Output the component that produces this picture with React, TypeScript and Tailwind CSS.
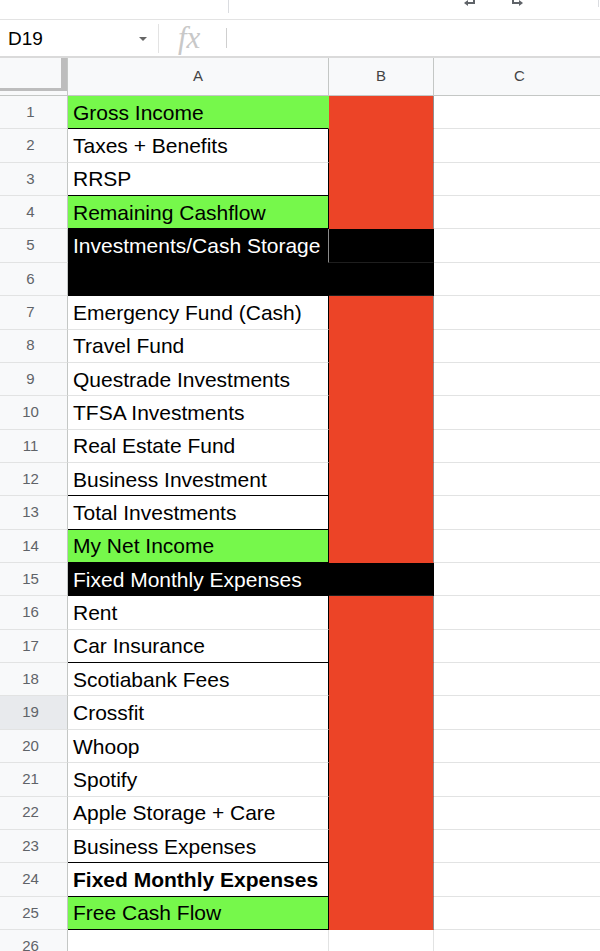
import React from "react";

type Fill = "white" | "green" | "black";
type FillB = "red" | "black" | "none";
type Edge = "black" | "gray" | "green" | "mid";

type Row = {
  n: number;
  label: string;
  a: Fill;
  b: FillB;
  bottom: Edge;
  right: Edge;
  bold?: boolean;
};

const rows: Row[] = [
  { n: 1, label: "Gross Income", a: "green", b: "red", bottom: "black", right: "green" },
  { n: 2, label: "Taxes + Benefits", a: "white", b: "red", bottom: "gray", right: "black" },
  { n: 3, label: "RRSP", a: "white", b: "red", bottom: "black", right: "black" },
  { n: 4, label: "Remaining Cashflow", a: "green", b: "red", bottom: "black", right: "black" },
  { n: 5, label: "Investments/Cash Storage", a: "black", b: "black", bottom: "black", right: "mid" },
  { n: 6, label: "", a: "black", b: "black", bottom: "black", right: "black" },
  { n: 7, label: "Emergency Fund (Cash)", a: "white", b: "red", bottom: "gray", right: "black" },
  { n: 8, label: "Travel Fund", a: "white", b: "red", bottom: "gray", right: "black" },
  { n: 9, label: "Questrade Investments", a: "white", b: "red", bottom: "gray", right: "black" },
  { n: 10, label: "TFSA Investments", a: "white", b: "red", bottom: "gray", right: "black" },
  { n: 11, label: "Real Estate Fund", a: "white", b: "red", bottom: "gray", right: "black" },
  { n: 12, label: "Business Investment", a: "white", b: "red", bottom: "black", right: "black" },
  { n: 13, label: "Total Investments", a: "white", b: "red", bottom: "black", right: "black" },
  { n: 14, label: "My Net Income", a: "green", b: "red", bottom: "black", right: "black" },
  { n: 15, label: "Fixed Monthly Expenses", a: "black", b: "black", bottom: "black", right: "black" },
  { n: 16, label: "Rent", a: "white", b: "red", bottom: "gray", right: "black" },
  { n: 17, label: "Car Insurance", a: "white", b: "red", bottom: "black", right: "black" },
  { n: 18, label: "Scotiabank Fees", a: "white", b: "red", bottom: "gray", right: "black" },
  { n: 19, label: "Crossfit", a: "white", b: "red", bottom: "gray", right: "black" },
  { n: 20, label: "Whoop", a: "white", b: "red", bottom: "gray", right: "black" },
  { n: 21, label: "Spotify", a: "white", b: "red", bottom: "gray", right: "black" },
  { n: 22, label: "Apple Storage + Care", a: "white", b: "red", bottom: "gray", right: "black" },
  { n: 23, label: "Business Expenses", a: "white", b: "red", bottom: "black", right: "black" },
  { n: 24, label: "Fixed Monthly Expenses", a: "white", b: "red", bottom: "black", right: "black", bold: true },
  { n: 25, label: "Free Cash Flow", a: "green", b: "red", bottom: "black", right: "black" },
  { n: 26, label: "", a: "white", b: "none", bottom: "gray", right: "gray" },
];

const fillA: Record<Fill, string> = {
  white: "bg-white text-black",
  green: "bg-[#76f84b] text-black",
  black: "bg-black text-white",
};

const bottomA: Record<Edge, string> = {
  black: "border-b-black",
  gray: "border-b-[#e2e3e3]",
  green: "border-b-[#76f84b]",
  mid: "border-b-[#8a8a8a]",
};

const rightA: Record<Edge, string> = {
  black: "border-r-black",
  gray: "border-r-[#e2e3e3]",
  green: "border-r-[#76f84b]",
  mid: "border-r-[#8a8a8a]",
};

const fillB: Record<FillB, string> = {
  red: "bg-[#ec4427] border-b-[#ec4427] border-r-[#8f8f8f]",
  black: "bg-black border-b-[#1e1e1e] border-r-black",
  none: "bg-white border-b-[#e2e3e3] border-r-[#e2e3e3]",
};

function TopStrip() {
  return (
    <div className="h-[20px] flex border-b border-[#e3e3e3] bg-white">
      <div className="w-[228px] shrink-0" />
      <div className="w-px h-[13px] bg-[#dadce0]" />
      <div className="w-[234px] shrink-0" />
      {/* partially visible toolbar arrows */}
      <svg width="14" height="6" viewBox="0 0 14 6" className="text-[#5f6368]">
        <path d="M11 -4 V3 H4" fill="none" stroke="currentColor" strokeWidth="2" />
        <path d="M1 3 L5 0 V6 Z" fill="currentColor" />
      </svg>
      <div className="w-[33px] shrink-0" />
      <svg width="14" height="6" viewBox="0 0 14 6" className="text-[#5f6368]">
        <path d="M3 -4 V3 H10" fill="none" stroke="currentColor" strokeWidth="2" />
        <path d="M13 3 L9 0 V6 Z" fill="currentColor" />
      </svg>
      <div className="w-[74px] shrink-0" />
      <div className="w-px h-[7px] bg-[#dadce0]" />
    </div>
  );
}

function FormulaBar() {
  return (
    <div className="h-[38px] flex items-center border-b-2 border-[#dadada] bg-white">
      <div className="w-[139px] shrink-0 pl-[8px] pt-[2px] text-[19px] text-black">D19</div>
      <svg width="8" height="4" viewBox="0 0 8 4" className="mt-[2px] shrink-0">
        <path d="M0 0 H8 L4 4 Z" fill="#666" />
      </svg>
      <div className="w-[11px] shrink-0" />
      <div className="w-px h-[29px] bg-[#e3e3e3]" />
      <div className="w-[19px] shrink-0" />
      <span className="w-[28px] font-['Liberation_Serif'] italic text-[31px] leading-none text-[#c8c8c8] pb-[2px]">
        fx
      </span>
      <div className="w-[20px] shrink-0" />
      <div className="w-px h-[20px] bg-[#cfcfcf]" />
    </div>
  );
}

function HeaderRow() {
  return (
    <div className="h-[38px] flex bg-[#f8f9fa] border-b border-[#c4c7c5] text-[15px] text-[#444]">
      <div className="w-[68px] shrink-0 flex flex-col border-r border-[#c4c7c5]">
        <div className="h-[30px] flex">
          <div className="w-[61px] shrink-0" />
          <div className="w-[6px] shrink-0 bg-[#bdbdbd]" />
        </div>
        <div className="h-[3px] w-[67px] bg-[#bdbdbd]" />
      </div>
      <div className="w-[261px] shrink-0 flex items-center justify-center border-r border-[#c4c7c5]">A</div>
      <div className="w-[105px] shrink-0 flex items-center justify-center border-r border-[#c4c7c5]">B</div>
      <div className="w-[172px] shrink-0 flex items-center justify-center border-r border-[#c4c7c5]">C</div>
    </div>
  );
}

function SheetRow({ row }: { row: Row }) {
  return (
    <div className="h-[33.36px] flex shrink-0">
      <div
        className={
          "w-[68px] shrink-0 flex items-center justify-center pr-[6px] border-r border-b border-r-[#c4c7c5] border-b-[#e2e3e3] text-[15px] text-[#5f6368] " +
          (row.n === 19 ? "bg-[#e8eaed]" : "bg-[#f8f9fa]")
        }
      >
        {row.n}
      </div>
      <div
        className={
          "w-[261px] shrink-0 flex items-center pl-[5px] border-r border-b text-[21px] leading-none whitespace-nowrap overflow-hidden " +
          fillA[row.a] +
          " " +
          bottomA[row.bottom] +
          " " +
          rightA[row.right] +
          (row.bold ? " font-bold" : "")
        }
      >
        {row.label}
      </div>
      <div className={"w-[105px] shrink-0 border-r border-b " + fillB[row.b]} />
      <div className="w-[172px] shrink-0 bg-white border-b border-r border-[#e2e3e3]" />
    </div>
  );
}

export default function App() {
  return (
    <div className="w-[600px] h-[951px] overflow-hidden bg-white font-['Liberation_Sans',Arial,sans-serif]">
      <TopStrip />
      <FormulaBar />
      <HeaderRow />
      <div className="flex flex-col">
        {rows.map((r) => (
          <SheetRow key={r.n} row={r} />
        ))}
      </div>
    </div>
  );
}
